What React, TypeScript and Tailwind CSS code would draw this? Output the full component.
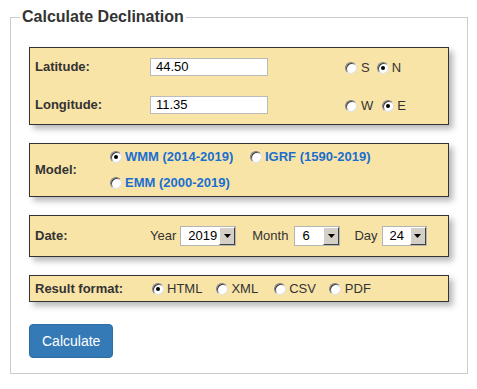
import React from 'react';

/**
 * Classic radio button look
 */
const Radio = ({ checked = false }: { checked?: boolean }) => (
  <span className="relative inline-block w-[12px] h-[12px] rounded-full bg-white border border-t-[#808080] border-l-[#808080] border-b-[#e0e0e0] border-r-[#e0e0e0] shadow-[inset_1px_1px_0_#404040]">
    {checked && (
      <span className="absolute left-[3px] top-[3px] w-[4px] h-[4px] rounded-full bg-black" />
    )}
  </span>
);

const RadioItem = ({
  label,
  checked = false,
  className = '',
  labelClass = '',
}: {
  label: string;
  checked?: boolean;
  className?: string;
  labelClass?: string;
}) => (
  <label className={`flex items-center ${className}`}>
    <Radio checked={checked} />
    <span className={`ml-[3px] ${labelClass}`}>{label}</span>
  </label>
);

/**
 * Old style select box with a bevelled arrow button
 */
const Select = ({ value, width }: { value: string; width: string }) => (
  <div className={`flex h-[20px] ${width} border border-[#b5b5b5] bg-white`}>
    <span className="flex-1 pl-[7px] leading-[18px] text-[13px] text-black">{value}</span>
    <span className="flex w-[16px] items-center justify-center bg-[#d4d0c8] border border-t-white border-l-white border-b-[#404040] border-r-[#404040]">
      <svg width="7" height="4" viewBox="0 0 7 4">
        <path d="M0 0h7L3.5 4z" fill="#000" />
      </svg>
    </span>
  </div>
);

const Panel = ({ children, className = '' }: { children: React.ReactNode; className?: string }) => (
  <div
    className={`bg-[#f9e4a8] border border-[#333] shadow-[4px_4px_6px_rgba(0,0,0,0.28)] pl-[5px] ${className}`}
  >
    {children}
  </div>
);

export default function App() {
  return (
    <div className="w-[477px] h-[389px] bg-white pt-[8px] pl-[10px] font-['Liberation_Sans',Arial,sans-serif] text-[13px] text-[#333]">
      <fieldset className="w-[458px] border border-[#ccc] px-[18px] pt-[21px] pb-[15px]">
        <legend className="-ml-[9px] px-[2px] text-[16px] leading-[18px] font-bold text-[#333]">
          Calculate Declination
        </legend>

        {/* Position */}
        <Panel className="py-[10px] flex flex-col gap-[20px]">
          <div className="flex items-center h-[18px]">
            <span className="w-[115px] font-bold">Latitude:</span>
            <input
              readOnly
              value="44.50"
              className="w-[118px] h-[18px] border border-[#bbb] bg-white px-[5px] text-[13px] text-black outline-none"
            />
            <div className="ml-[77px] flex items-center pt-[2px]">
              <RadioItem label="S" labelClass="ml-[4px]" />
              <RadioItem label="N" checked className="ml-[7px]" labelClass="ml-[3px]" />
            </div>
          </div>
          <div className="flex items-center h-[18px]">
            <span className="w-[115px] font-bold">Longitude:</span>
            <input
              readOnly
              value="11.35"
              className="w-[118px] h-[18px] border border-[#bbb] bg-white px-[5px] text-[13px] text-black outline-none"
            />
            <div className="ml-[77px] flex items-center pt-[2px]">
              <RadioItem label="W" labelClass="ml-[4px]" />
              <RadioItem label="E" checked className="ml-[9px]" labelClass="ml-[3px]" />
            </div>
          </div>
        </Panel>

        {/* Model */}
        <Panel className="mt-[18px] py-[5px] flex items-center">
          <span className="w-[75px] font-bold">Model:</span>
          <div className="flex flex-col gap-[10px] font-bold text-[#1a6fcf]">
            <div className="flex items-center h-[16px]">
              <RadioItem label="WMM (2014-2019)" checked className="w-[140px]" />
              <RadioItem label="IGRF (1590-2019)" />
            </div>
            <div className="flex items-center h-[16px]">
              <RadioItem label="EMM (2000-2019)" />
            </div>
          </div>
        </Panel>

        {/* Date */}
        <Panel className="mt-[18px] h-[42px] flex items-center">
          <span className="w-[115px] font-bold">Date:</span>
          <span>Year</span>
          <div className="ml-[4px]">
            <Select value="2019" width="w-[56px]" />
          </div>
          <span className="ml-[16px]">Month</span>
          <div className="ml-[6px]">
            <Select value="6" width="w-[46px]" />
          </div>
          <span className="ml-[14px]">Day</span>
          <div className="ml-[4px]">
            <Select value="24" width="w-[45px]" />
          </div>
        </Panel>

        {/* Result format */}
        <Panel className="mt-[18px] h-[27px] flex items-center">
          <span className="w-[117px] font-bold">Result format:</span>
          <RadioItem label="HTML" checked />
          <RadioItem label="XML" className="ml-[14px]" />
          <RadioItem label="CSV" className="ml-[16px]" />
          <RadioItem label="PDF" className="ml-[13px]" labelClass="ml-[4px]" />
        </Panel>

        <button className="mt-[22px] h-[34px] px-[12px] rounded-[4px] border border-[#2e6da4] bg-[#337ab7] text-[14px] leading-[20px] text-white">
          Calculate
        </button>
      </fieldset>
    </div>
  );
}
